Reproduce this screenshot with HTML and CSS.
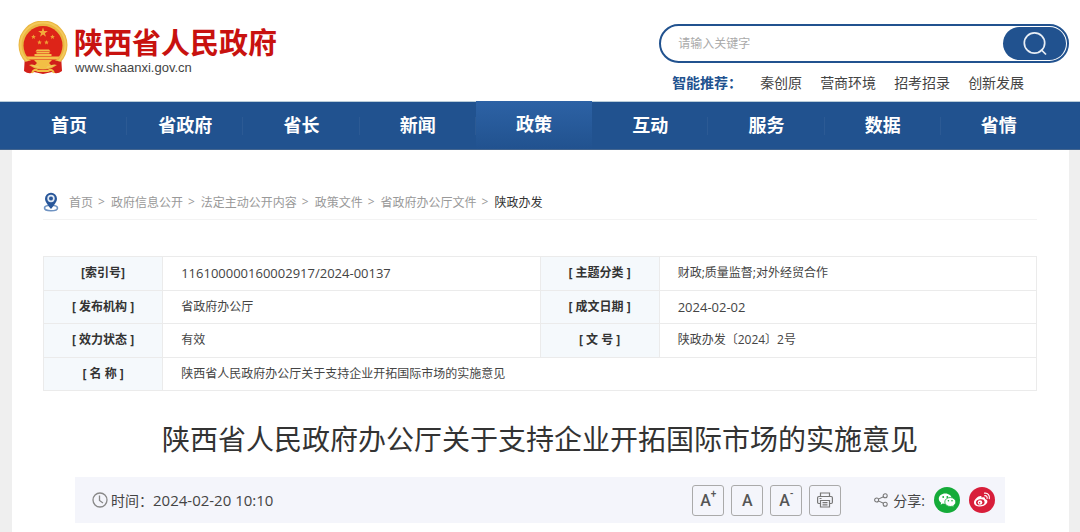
FILE: index.html
```html
<!DOCTYPE html>
<html lang="zh-CN">
<head>
  <meta charset="UTF-8">
  <meta name="viewport" content="width=device-width, initial-scale=1.0">
  <title>陕西省人民政府</title>
  <link rel="stylesheet" href="styles.css">
</head>
<body>
  <!-- Header -->
  <header class="header">
    <a class="logo" href="#">
      <svg class="emblem" viewBox="0 0 50 54" aria-hidden="true">
        <path d="M7 34 L6 50 Q11 54 16 51 L25 53 L34 51 Q39 54 44 50 L43 34 Z" fill="#d3201a"/>
        <circle cx="25" cy="24" r="24.500" fill="#eab640"/>
        <circle cx="25" cy="24" r="22.500" fill="none" stroke="#f3c85a" stroke-width="2"/>
        <circle cx="25" cy="24.500" r="19.500" fill="#dd2418"/>
        <path d="M25 6.500l1.200 3.500h3.700l-3 2.200 1.100 3.600-3-2.200-3 2.200 1.100-3.600-3-2.200h3.700z" fill="#f2a93a"/>
        <g fill="#eea036">
          <path d="M15.500 13.500l.7 1.500 1.600.2-1.200 1.100.3 1.600-1.400-.8-1.400.8.3-1.600-1.200-1.100 1.600-.2z"/>
          <path d="M34.500 13.500l.7 1.500 1.600.2-1.200 1.100.3 1.600-1.400-.8-1.400.8.3-1.600-1.200-1.100 1.600-.2z"/>
          <path d="M21.500 19l.7 1.500 1.600.2-1.200 1.100.3 1.600-1.400-.8-1.400.8.3-1.600-1.200-1.100 1.600-.2z"/>
          <path d="M28.500 19l.7 1.500 1.600.2-1.200 1.100.3 1.600-1.400-.8-1.400.8.3-1.600-1.200-1.100 1.600-.2z"/>
        </g>
        <path d="M19 28.500h12l1.500 2h-15zM18.500 31h13v1.500h-13zM16.500 33h17v2h-17zM8 35.500h34l-3 3H11z" fill="#f4c04a"/>
        <path d="M7 41 Q14 38 18 41 L32 41 Q36 38 43 41 L42 45 Q36 42 31 45 L19 45 Q14 42 8 45 Z" fill="#cf201a"/>
        <path d="M16 39h18l-3 3 3 3h-5l-1 3h-6l-1-3h-5l3-3z" fill="#f2bf45"/>
        <path d="M14 52 Q16 47 20 50 L25 50 L30 50 Q34 47 36 52" fill="none" stroke="#f2bf45" stroke-width="2"/>
      </svg>
      <span class="logo-text">
        <strong class="logo-name">陕西省人民政府</strong>
        <span class="logo-url">www.shaanxi.gov.cn</span>
      </span>
    </a>

    <div class="search-area">
      <form class="search" action="#">
        <input type="text" placeholder="请输入关键字" aria-label="请输入关键字">
        <button type="button" aria-label="搜索">
          <svg viewBox="0 0 26 26" width="26" height="26" fill="none" stroke="#e8eef5" stroke-width="1.700">
            <circle cx="12.500" cy="12" r="10.200"/>
            <path d="M19 18.500l5 5"/>
          </svg>
        </button>
      </form>
      <div class="hot">
        <strong>智能推荐：</strong>
        <a href="#">秦创原</a>
        <a href="#">营商环境</a>
        <a href="#">招考招录</a>
        <a href="#">创新发展</a>
      </div>
    </div>
  </header>

  <!-- Main nav -->
  <nav class="nav">
    <ul>
      <li><a href="#">首页</a></li>
      <li><a href="#">省政府</a></li>
      <li><a href="#">省长</a></li>
      <li><a href="#">新闻</a></li>
      <li><a class="active" href="#">政策</a></li>
      <li><a href="#">互动</a></li>
      <li><a href="#">服务</a></li>
      <li><a href="#">数据</a></li>
      <li><a href="#">省情</a></li>
    </ul>
  </nav>

  <main class="container">
    <!-- Breadcrumb -->
    <div class="crumbs">
      <svg viewBox="0 0 16 20" width="16" height="20" aria-hidden="true">
        <ellipse cx="8" cy="16" rx="6.500" ry="2.800" fill="none" stroke="#6f93c2" stroke-width="1.600"/>
        <path d="M8 17C4.500 12.500 2 9.600 2 6.700a6 6 0 0 1 12 0c0 2.900-2.500 5.800-6 10.300z" fill="#29579a"/>
        <circle cx="8" cy="6.500" r="3.700" fill="#dfe8f3"/>
        <circle cx="8" cy="6.500" r="2" fill="#29579a"/>
      </svg>
      <a href="#">首页</a><span>&gt;</span>
      <a href="#">政府信息公开</a><span>&gt;</span>
      <a href="#">法定主动公开内容</a><span>&gt;</span>
      <a href="#">政策文件</a><span>&gt;</span>
      <a href="#">省政府办公厅文件</a><span>&gt;</span>
      <a class="current" href="#">陕政办发</a>
    </div>

    <!-- Document info -->
    <table class="info">
      <tr>
        <th scope="row">[索引号]</th>
        <td class="num">116100000160002917/2024-00137</td>
        <th scope="row">[ 主题分类 ]</th>
        <td>财政;质量监督;对外经贸合作</td>
      </tr>
      <tr>
        <th scope="row">[ 发布机构 ]</th>
        <td>省政府办公厅</td>
        <th scope="row">[ 成文日期 ]</th>
        <td class="num">2024-02-02</td>
      </tr>
      <tr>
        <th scope="row">[ 效力状态 ]</th>
        <td>有效</td>
        <th scope="row">[ 文 号 ]</th>
        <td>陕政办发〔2024〕2号</td>
      </tr>
      <tr>
        <th scope="row">[ 名 称 ]</th>
        <td colspan="3">陕西省人民政府办公厅关于支持企业开拓国际市场的实施意见</td>
      </tr>
    </table>

    <h1>陕西省人民政府办公厅关于支持企业开拓国际市场的实施意见</h1>

    <div class="meta">
      <div class="time">
        <svg viewBox="0 0 16 16" width="16" height="16" fill="none" stroke="#888" stroke-width="1.300" aria-hidden="true">
          <circle cx="8" cy="8" r="7"/>
          <path d="M7.500 3.500v5l3.500 2.500"/>
        </svg>
        <span>时间：</span>
        <time datetime="2024-02-20T10:10">2024-02-20 10:10</time>
      </div>
      <div class="tools">
        <button type="button">A<sup>+</sup></button>
        <button type="button">A</button>
        <button type="button">A<sup>-</sup></button>
        <button type="button" aria-label="打印">
          <svg viewBox="0 0 16 16" width="16" height="16" fill="none" stroke="#777" stroke-width="1.200">
            <path d="M3.500 4V1h9v3M3.500 11.500H1.800Q.6 11.500.6 10.300V5.800Q.6 4.500 1.900 4.500h12.200q1.300 0 1.300 1.300v4.500q0 1.200-1.200 1.200h-1.700"/>
            <path d="M3.500 8.500h9V15h-9zM5.500 10.700h5M5.500 12.900h5M2.500 6.500h2"/>
          </svg>
        </button>
      </div>
      <div class="share">
        <svg viewBox="0 0 16 16" width="14" height="14" fill="none" stroke="#777" stroke-width="1.200" aria-hidden="true">
          <circle cx="3" cy="8" r="2.300"/>
          <circle cx="12.800" cy="3.200" r="2.300"/>
          <circle cx="12.800" cy="12.800" r="2.300"/>
          <path d="M5 7l5.800-2.800M5 9l5.800 2.800"/>
        </svg>
        <span>分享:</span>
        <a href="#" aria-label="微信">
          <svg viewBox="0 0 26 26" width="26" height="26">
            <circle cx="13" cy="13" r="13" fill="#15ab39"/>
            <path d="M11.300 6.500c-3.700 0-6.500 2.300-6.500 5.200 0 1.700.9 3.100 2.400 4.100l-.6 1.900 2.200-1.200c.8.200 1.600.3 2.500.3 3.600 0 6.500-2.300 6.500-5.100s-2.900-5.200-6.500-5.200z" fill="#fff"/>
            <path d="M16.300 10.500c-3.200 0-5.500 2-5.500 4.500s2.400 4.500 5.500 4.500c.7 0 1.400-.1 2-.3l1.800 1-.5-1.600c1.300-.9 2.200-2.100 2.200-3.600 0-2.500-2.500-4.500-5.500-4.500z" fill="#fff" stroke="#15ab39" stroke-width=".8"/>
            <g fill="#15ab39">
              <circle cx="9.200" cy="10" r=".9"/>
              <circle cx="13.300" cy="10" r=".9"/>
              <circle cx="14.400" cy="13.800" r=".8"/>
              <circle cx="18" cy="13.800" r=".8"/>
            </g>
          </svg>
        </a>
        <a href="#" aria-label="微博">
          <svg viewBox="0 0 26 26" width="26" height="26">
            <circle cx="13" cy="13" r="13" fill="#d81e3a"/>
            <path d="M11.500 9c.9 0 1.300.6 1 1.700 1.900-.8 3.800-.6 3.500 1.300 2.600.7 3.100 2.600 1.600 4.600-1.400 1.900-3.800 2.900-6.500 2.900-3.500 0-6.100-1.600-6.100-4.100C5 12.700 9 9 11.500 9z" fill="#fff"/>
            <ellipse cx="11.300" cy="15.300" rx="4.300" ry="3" transform="rotate(-8 11.300 15.300)" fill="#d81e3a"/>
            <circle cx="11" cy="15.500" r="2.300" fill="#fff"/>
            <circle cx="10.600" cy="15.800" r=".8" fill="#d81e3a"/>
            <path d="M15.500 6.200c3.300-.5 5.700 2.200 4.800 5.500M15.800 8.700c1.700-.2 2.700 1 2.300 2.600" fill="none" stroke="#fff" stroke-width="1.200" stroke-linecap="round"/>
          </svg>
        </a>
      </div>
    </div>
  </main>
</body>
</html>
```

FILE: styles.css
```css
* {
  margin: 0;
  padding: 0;
  box-sizing: border-box;
}
body {
  display: flex;
  flex-direction: column;
  min-height: 100vh;
  font-family: "Open Sans", "Noto Sans CJK SC", sans-serif;
  font-size: 12px;
  color: #444;
  background-color: #efefef;
}
a {
  color: inherit;
  text-decoration: none;
}
svg {
  display: block;
  flex: none;
}
button, input {
  font-family: inherit;
}

/* header */
.header {
  display: flex;
  justify-content: space-between;
  align-items: flex-start;
  padding: 21px 11px 8px 18px;
  background-color: #fff;
}
.logo {
  display: flex;
  gap: 6px;
}
.emblem {
  width: 50px;
  height: 54px;
}
.logo-text {
  display: flex;
  flex-direction: column;
  padding-top: 5px;
}
.logo-name {
  font-size: 29px;
  line-height: 34px;
  color: #c8120f;
}
.logo-url {
  padding-left: 1px;
  font-family: "Liberation Sans", Arial, sans-serif;
  font-size: 13px;
  line-height: 16px;
  color: #444;
}
.search-area {
  width: 39%;
  padding-top: 3px;
}
.search {
  display: flex;
  height: 39px;
  padding: 1px;
  border: 2px solid #21528f;
  border-radius: 20px;
}
.search input {
  flex: 1;
  min-width: 0;
  padding-left: 16px;
  border: none;
  outline: none;
  background: none;
  font-size: 12px;
}
.search input::placeholder {
  color: #aaa;
}
.search button {
  display: flex;
  align-items: center;
  justify-content: center;
  width: 63px;
  border: none;
  border-radius: 17px;
  background-color: #21528f;
  cursor: pointer;
}
.hot {
  display: flex;
  gap: 18px;
  padding: 10px 0 0 13px;
  font-size: 14px;
  line-height: 20px;
}
.hot strong {
  color: #21528f;
}

/* nav */
.nav {
  padding: 0 23px 0 11px;
  background-color: #21528f;
  border-top: 1px solid #b9ccd8;
  border-bottom: 1px solid #43658f;
}
.nav ul {
  display: flex;
  list-style: none;
}
.nav li {
  flex: 1;
  background: linear-gradient(#2c5a94, #2c5a94) right center / 1px 18px no-repeat;
}
.nav li:last-child {
  background: none;
}
.nav a {
  display: block;
  font-size: 18px;
  font-weight: bold;
  line-height: 47px;
  text-align: center;
  color: #fff;
}
.nav .active {
  margin-top: -1px;
  padding-bottom: 1px;
  background: linear-gradient(#2d62a5, #21528f);
}

/* content */
.container {
  flex: 1;
  margin: 0 11px 0 12px;
  padding: 36px 32px 9px 31px;
  background-color: #fff;
}
.crumbs {
  display: flex;
  align-items: center;
  height: 34px;
  margin-bottom: 36px;
  padding-bottom: 2px;
  color: #999;
  border-bottom: 1px solid #f3f3f3;
}
.crumbs svg {
  margin-right: 10px;
}
.crumbs span {
  margin: 0 6px 0 5px;
}
.crumbs .current {
  color: #333;
}
.info {
  width: 100%;
  height: 135px;
  table-layout: fixed;
  border-collapse: collapse;
}
.info th, .info td {
  height: 33px;
  border: 1px solid #ebebeb;
  line-height: 18px;
}
.info th {
  width: 12%;
  background-color: #f5f9fc;
  color: #333;
}
.info td {
  padding-left: 18px;
}
.info .num {
  font-size: 13px;
}
h1 {
  padding: 27px 0 17px;
  font-size: 28px;
  font-weight: normal;
  line-height: 42px;
  text-align: center;
  color: #333;
}
.meta {
  display: flex;
  align-items: center;
  height: 46px;
  margin: 0 32px;
  padding: 0 10px 0 17px;
  font-size: 14px;
  background-color: #f4f5fb;
}
.time {
  display: flex;
  align-items: center;
  margin-right: auto;
}
.time span {
  margin-left: 3px;
}
.time time {
  font-size: 15px;
}
.tools {
  display: flex;
  gap: 7px;
  margin-right: 33px;
}
.tools button {
  display: flex;
  align-items: center;
  justify-content: center;
  width: 32px;
  height: 31px;
  border: 1px solid #aaa;
  border-radius: 3px;
  background: none;
  font-family: Roboto, sans-serif;
  font-size: 16px;
  font-weight: 500;
  color: #555;
  cursor: pointer;
}
.tools sup {
  align-self: flex-start;
  padding-top: 3px;
  font-size: 10px;
  line-height: 10px;
}
.share {
  display: flex;
  align-items: center;
}
.share span {
  margin-left: 5px;
}
.share a {
  margin-left: 9px;
}
```
